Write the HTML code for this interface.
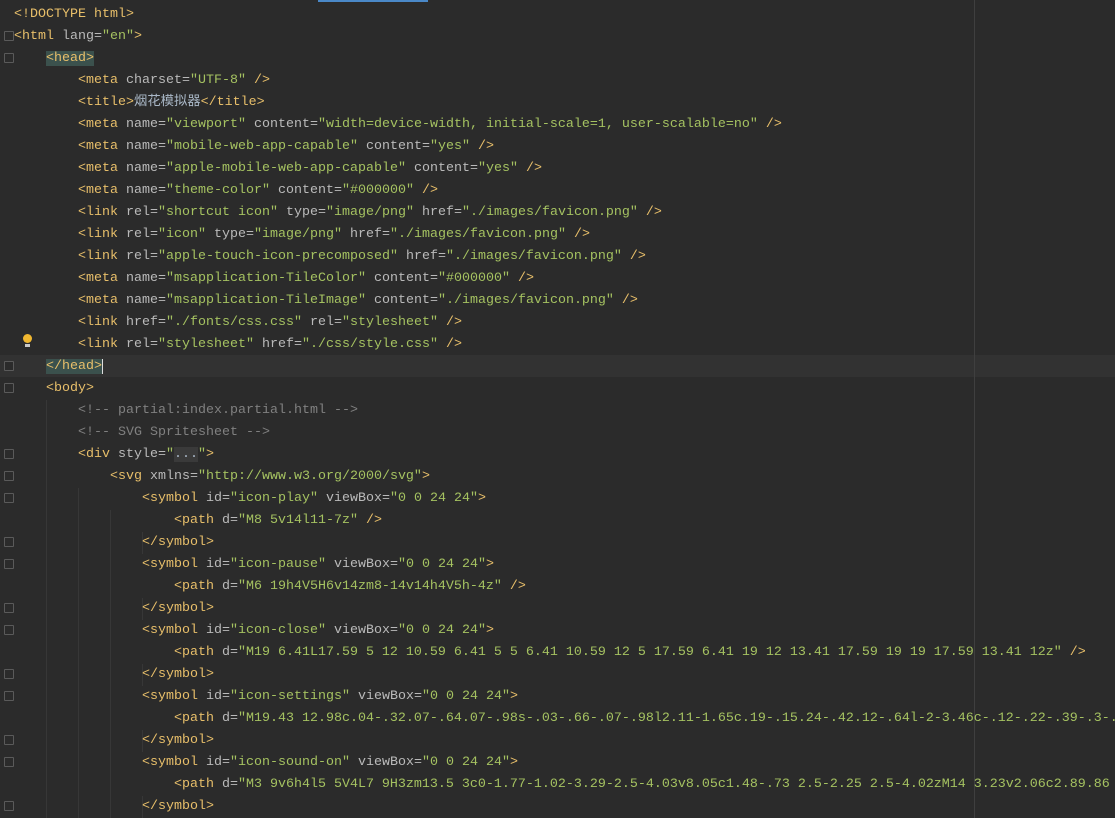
<!DOCTYPE html>
<html><head><meta charset="utf-8"><style>
html,body{margin:0;padding:0}
body{width:1115px;height:818px;background:#2b2b2b;overflow:hidden;position:relative;font-family:"Liberation Mono","Noto Sans CJK SC",monospace;font-size:13.33px;}
#code{position:absolute;left:14px;top:4px;width:1101px;overflow:hidden;line-height:22px;color:#a9b7c6}
.l{height:22px;white-space:pre}
.t{color:#e8bf6a}.a{color:#bababa}.s{color:#a5c261}.c{color:#808080}
.cur{position:absolute;left:0;top:355px;width:1115px;height:22px;background:#323232}
.hl{background:#3b514d}
.margin{position:absolute;left:974px;top:0;width:1px;height:818px;background:#3f3f3f}
.fold{position:absolute;left:4px;width:8px;height:8px;border:1px solid #5a5a5a;border-radius:1px;background:#2b2b2b}
.guide{position:absolute;width:1px;background:#373737}
.bar{position:absolute;left:318px;top:0;width:110px;height:2px;background:#4a88c7}
.bulb{position:absolute;left:23px;top:334px;width:9px;height:9px;border-radius:50%;background:#f0b730}
.bulb:after{content:"";position:absolute;left:2px;top:10px;width:5px;height:3px;background:#c9c9c9}
</style></head><body>
<div class="cur"></div>
<div class="margin"></div>
<div class="bar"></div>
<div class="guide" style="left:46px;top:400px;height:418px"></div>
<div class="guide" style="left:78px;top:488px;height:330px"></div>
<div class="guide" style="left:110px;top:510px;height:308px"></div>
<div class="guide" style="left:142px;top:532px;height:22px"></div>
<div class="guide" style="left:142px;top:598px;height:22px"></div>
<div class="guide" style="left:142px;top:664px;height:22px"></div>
<div class="guide" style="left:142px;top:730px;height:22px"></div>
<div class="guide" style="left:142px;top:796px;height:22px"></div>
<div class="fold" style="top:31px"></div>
<div class="fold" style="top:53px"></div>
<div class="fold" style="top:361px"></div>
<div class="fold" style="top:383px"></div>
<div class="fold" style="top:449px"></div>
<div class="fold" style="top:471px"></div>
<div class="fold" style="top:493px"></div>
<div class="fold" style="top:537px"></div>
<div class="fold" style="top:559px"></div>
<div class="fold" style="top:603px"></div>
<div class="fold" style="top:625px"></div>
<div class="fold" style="top:669px"></div>
<div class="fold" style="top:691px"></div>
<div class="fold" style="top:735px"></div>
<div class="fold" style="top:757px"></div>
<div class="fold" style="top:801px"></div>
<div class="bulb"></div>
<div id="code"><div class="l"><span class="t">&lt;!DOCTYPE html&gt;</span></div><div class="l"><span class="t">&lt;html </span><span class="a">lang=</span><span class="s">"en"</span><span class="t">&gt;</span></div><div class="l">    <span class="t hl">&lt;head&gt;</span></div><div class="l">        <span class="t">&lt;meta </span><span class="a">charset=</span><span class="s">"UTF-8"</span><span class="t"> /&gt;</span></div><div class="l">        <span class="t">&lt;title&gt;</span>烟花模拟器<span class="t">&lt;/title&gt;</span></div><div class="l">        <span class="t">&lt;meta </span><span class="a">name=</span><span class="s">"viewport"</span> <span class="a">content=</span><span class="s">"width=device-width, initial-scale=1, user-scalable=no"</span><span class="t"> /&gt;</span></div><div class="l">        <span class="t">&lt;meta </span><span class="a">name=</span><span class="s">"mobile-web-app-capable"</span> <span class="a">content=</span><span class="s">"yes"</span><span class="t"> /&gt;</span></div><div class="l">        <span class="t">&lt;meta </span><span class="a">name=</span><span class="s">"apple-mobile-web-app-capable"</span> <span class="a">content=</span><span class="s">"yes"</span><span class="t"> /&gt;</span></div><div class="l">        <span class="t">&lt;meta </span><span class="a">name=</span><span class="s">"theme-color"</span> <span class="a">content=</span><span class="s">"#000000"</span><span class="t"> /&gt;</span></div><div class="l">        <span class="t">&lt;link </span><span class="a">rel=</span><span class="s">"shortcut icon"</span> <span class="a">type=</span><span class="s">"image/png"</span> <span class="a">href=</span><span class="s">"./images/favicon.png"</span><span class="t"> /&gt;</span></div><div class="l">        <span class="t">&lt;link </span><span class="a">rel=</span><span class="s">"icon"</span> <span class="a">type=</span><span class="s">"image/png"</span> <span class="a">href=</span><span class="s">"./images/favicon.png"</span><span class="t"> /&gt;</span></div><div class="l">        <span class="t">&lt;link </span><span class="a">rel=</span><span class="s">"apple-touch-icon-precomposed"</span> <span class="a">href=</span><span class="s">"./images/favicon.png"</span><span class="t"> /&gt;</span></div><div class="l">        <span class="t">&lt;meta </span><span class="a">name=</span><span class="s">"msapplication-TileColor"</span> <span class="a">content=</span><span class="s">"#000000"</span><span class="t"> /&gt;</span></div><div class="l">        <span class="t">&lt;meta </span><span class="a">name=</span><span class="s">"msapplication-TileImage"</span> <span class="a">content=</span><span class="s">"./images/favicon.png"</span><span class="t"> /&gt;</span></div><div class="l">        <span class="t">&lt;link </span><span class="a">href=</span><span class="s">"./fonts/css.css"</span> <span class="a">rel=</span><span class="s">"stylesheet"</span><span class="t"> /&gt;</span></div><div class="l">        <span class="t">&lt;link </span><span class="a">rel=</span><span class="s">"stylesheet"</span> <span class="a">href=</span><span class="s">"./css/style.css"</span><span class="t"> /&gt;</span></div><div class="l">    <span class="t hl">&lt;/head&gt;</span><span style="border-left:1px solid #ddd"></span></div><div class="l">    <span class="t">&lt;body&gt;</span></div><div class="l">        <span class="c">&lt;!-- partial:index.partial.html --&gt;</span></div><div class="l">        <span class="c">&lt;!-- SVG Spritesheet --&gt;</span></div><div class="l">        <span class="t">&lt;div </span><span class="a">style=</span><span class="s">"<span style="background:#3a3a3a;color:#a9b7c6">...</span>"</span><span class="t">&gt;</span></div><div class="l">            <span class="t">&lt;svg </span><span class="a">xmlns=</span><span class="s">"http://www.w3.org/2000/svg"</span><span class="t">&gt;</span></div><div class="l">                <span class="t">&lt;symbol </span><span class="a">id=</span><span class="s">"icon-play"</span> <span class="a">viewBox=</span><span class="s">"0 0 24 24"</span><span class="t">&gt;</span></div><div class="l">                    <span class="t">&lt;path </span><span class="a">d=</span><span class="s">"M8 5v14l11-7z"</span><span class="t"> /&gt;</span></div><div class="l">                <span class="t">&lt;/symbol&gt;</span></div><div class="l">                <span class="t">&lt;symbol </span><span class="a">id=</span><span class="s">"icon-pause"</span> <span class="a">viewBox=</span><span class="s">"0 0 24 24"</span><span class="t">&gt;</span></div><div class="l">                    <span class="t">&lt;path </span><span class="a">d=</span><span class="s">"M6 19h4V5H6v14zm8-14v14h4V5h-4z"</span><span class="t"> /&gt;</span></div><div class="l">                <span class="t">&lt;/symbol&gt;</span></div><div class="l">                <span class="t">&lt;symbol </span><span class="a">id=</span><span class="s">"icon-close"</span> <span class="a">viewBox=</span><span class="s">"0 0 24 24"</span><span class="t">&gt;</span></div><div class="l">                    <span class="t">&lt;path </span><span class="a">d=</span><span class="s">"M19 6.41L17.59 5 12 10.59 6.41 5 5 6.41 10.59 12 5 17.59 6.41 19 12 13.41 17.59 19 19 17.59 13.41 12z"</span><span class="t"> /&gt;</span></div><div class="l">                <span class="t">&lt;/symbol&gt;</span></div><div class="l">                <span class="t">&lt;symbol </span><span class="a">id=</span><span class="s">"icon-settings"</span> <span class="a">viewBox=</span><span class="s">"0 0 24 24"</span><span class="t">&gt;</span></div><div class="l">                    <span class="t">&lt;path </span><span class="a">d=</span><span class="s">"M19.43 12.98c.04-.32.07-.64.07-.98s-.03-.66-.07-.98l2.11-1.65c.19-.15.24-.42.12-.64l-2-3.46c-.12-.22-.39-.3-.61-.22</span></div><div class="l">                <span class="t">&lt;/symbol&gt;</span></div><div class="l">                <span class="t">&lt;symbol </span><span class="a">id=</span><span class="s">"icon-sound-on"</span> <span class="a">viewBox=</span><span class="s">"0 0 24 24"</span><span class="t">&gt;</span></div><div class="l">                    <span class="t">&lt;path </span><span class="a">d=</span><span class="s">"M3 9v6h4l5 5V4L7 9H3zm13.5 3c0-1.77-1.02-3.29-2.5-4.03v8.05c1.48-.73 2.5-2.25 2.5-4.02zM14 3.23v2.06c2.89.86 2.5</span></div><div class="l">                <span class="t">&lt;/symbol&gt;</span></div></div>
</body></html>
